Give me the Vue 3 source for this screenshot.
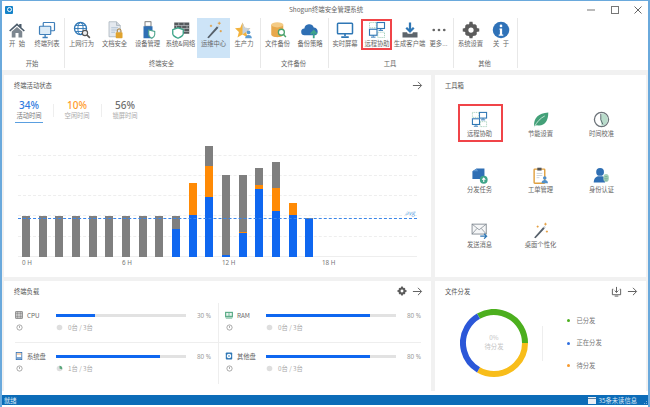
<template>
  <div class="window">
    <header class="titlebar">
      <span class="app-logo"><span></span></span>
      <span class="app-title">Shogun终端安全管理系统</span>
      <div class="win-ctrls">
        <svg width="10" height="10" viewBox="0 0 10 10"><path d="M1 5h8" stroke="#777" /></svg>
        <svg width="10" height="10" viewBox="0 0 10 10"><rect x="1.5" y="1.5" width="7" height="7" fill="none" stroke="#777" /></svg>
        <svg width="10" height="10" viewBox="0 0 10 10"><path d="M1.5 1.5l7 7M8.5 1.5l-7 7" stroke="#666" /></svg>
      </div>
    </header>

    <nav class="ribbon">
      <section v-for="group in ribbon" :key="group.name" class="rgroup">
        <div class="ritems">
          <div
            v-for="item in group.items"
            :key="item.label"
            class="ritem"
            :class="{ active: item.active, marked: item.marked }"
            :style="{ width: item.w + 'px' }"
          >
            <svg class="ricon" viewBox="0 0 24 24" v-html="icons[item.icon]"></svg>
            <span>{{ item.label }}</span>
          </div>
        </div>
        <div class="gname">{{ group.name }}</div>
      </section>
    </nav>

    <main class="content">
      <section class="panel activity">
        <div class="phead">
          <span class="ptitle">终端活动状态</span>
          <svg class="act" viewBox="0 0 12 12"><path d="M1 6h9M6.5 2l4 4-4 4" fill="none" stroke="#555" /></svg>
        </div>
        <div class="tabs">
          <div v-for="tab in tabs" :key="tab.label" class="tab" :class="{ on: tab.on }">
            <b :style="{ color: tab.color }">{{ tab.value }}</b>
            <span>{{ tab.label }}</span>
          </div>
        </div>
        <div class="chart">
          <i v-for="n in 6" :key="n" class="gridline"></i>
          <div class="bars">
            <div v-for="(bar, i) in bars" :key="i" class="bar">
              <i class="gray" :style="{ height: bar[0] + 'px' }"></i>
              <i class="orange" :style="{ height: bar[1] + 'px' }"></i>
              <i class="blue" :style="{ height: bar[2] + 'px' }"></i>
            </div>
          </div>
          <i class="avg"></i>
          <em class="avg-label">avg</em>
        </div>
        <div class="hours">
          <span v-for="h in ['0 H', '6 H', '12 H', '18 H']" :key="h">{{ h }}</span>
        </div>
      </section>

      <section class="panel tools">
        <div class="phead"><span class="ptitle">工具箱</span></div>
        <div class="tool-grid">
          <div v-for="tool in tools" :key="tool.label" class="tool" :class="{ marked: tool.marked }">
            <svg class="ticon" viewBox="0 0 24 24" v-html="icons[tool.icon]"></svg>
            <span>{{ tool.label }}</span>
          </div>
        </div>
      </section>

      <section class="panel load">
        <div class="phead">
          <span class="ptitle">终端负载</span>
          <div class="acts">
            <svg class="act gear" viewBox="0 0 24 24" v-html="icons.gear"></svg>
            <svg class="act" viewBox="0 0 12 12"><path d="M1 6h9M6.5 2l4 4-4 4" fill="none" stroke="#555" /></svg>
          </div>
        </div>
        <div class="meters">
          <div v-for="m in meters" :key="m.name" class="meter">
            <div class="mline">
              <svg class="micon" viewBox="0 0 10 10" v-html="m.icon"></svg>
              <span class="mname">{{ m.name }}</span>
              <div class="track"><div class="fill" :style="{ width: m.pct + '%' }"></div></div>
              <span class="mpct">{{ m.pct }} %</span>
            </div>
            <div class="msub">
              <svg class="info" viewBox="0 0 8 8"><circle cx="4" cy="4" r="3" fill="none" stroke="#777" stroke-width=".7" /><path d="M4 2.2v2.3" stroke="#777" stroke-width=".7" /></svg>
              <svg class="pie" viewBox="0 0 8 8"><circle cx="4" cy="4" r="3.2" fill="#dedede" /><path v-if="m.used" d="M4 4V.8A3.2 3.2 0 0 1 7 5z" fill="#5aa77c" /></svg>
              <span>{{ m.count }}</span>
            </div>
          </div>
        </div>
      </section>

      <section class="panel files">
        <div class="phead">
          <span class="ptitle">文件分发</span>
          <div class="acts">
            <svg class="act" viewBox="0 0 12 12"><path d="M2.5 3.5H1.5v6h9v-6h-1M6 1v6M4 5l2 2 2-2M4 11h4" fill="none" stroke="#555" /></svg>
            <svg class="act" viewBox="0 0 12 12"><path d="M1 6h9M6.5 2l4 4-4 4" fill="none" stroke="#555" /></svg>
          </div>
        </div>
        <div class="dist">
          <div class="donut">
            <svg width="68" height="68" viewBox="0 0 68 68">
              <g fill="none" stroke-width="6">
                <circle cx="34" cy="34" r="31" pathLength="3" stroke="#4caf1e" stroke-dasharray="1 2" transform="rotate(-120 34 34)" />
                <circle cx="34" cy="34" r="31" pathLength="3" stroke="#f8bd1a" stroke-dasharray="1 2" />
                <circle cx="34" cy="34" r="31" pathLength="3" stroke="#2b57d8" stroke-dasharray="1 2" transform="rotate(120 34 34)" />
              </g>
            </svg>
            <div class="donut-text">0%<br />待分发</div>
          </div>
          <i class="vr"></i>
          <ul class="legend">
            <li v-for="l in legend" :key="l.label"><i :style="{ background: l.color }"></i>{{ l.label }}</li>
          </ul>
        </div>
      </section>
    </main>

    <footer class="statusbar">
      <span>就绪</span>
      <div class="unread">
        <svg width="8" height="7" viewBox="0 0 8 7"><rect width="8" height="7" fill="#e8eef4" /><path d="M0 1.5h8" stroke="#5b7fa0" /></svg>
        <span>35条未读信息</span>
        <svg class="grip" width="5" height="5" viewBox="0 0 5 5"><path d="M4 0h1v1H4zM2 2h1v1H2zM4 2h1v1H4zM0 4h1v1H0zM2 4h1v1H2zM4 4h1v1H4z" fill="#7fb0d8" /></svg>
      </div>
    </footer>
  </div>
</template>

<script setup>
const icons = {
  home: '<path d="M12 3L1.5 12.5 3 14l9-8 9 8 1.5-1.5L18 8.500V4h-3v2z" fill="#4b5b6a"/><path d="M5 14l7-6 7 6v8h-5v-6h-4v6H5z" fill="#7d8790"/>',
  list: '<rect x="7" y="2" width="15" height="11" rx="1" fill="#fff" stroke="#3f7fba" stroke-width="1.6"/><rect x="2" y="7" width="15" height="11" rx="1" fill="#dcebf7" stroke="#3f7fba" stroke-width="1.6"/><path d="M9.5 18v3M6 22h7" stroke="#3f7fba" stroke-width="1.8"/>',
  web: '<circle cx="10" cy="10" r="8" fill="#fff" stroke="#2f77b5" stroke-width="1.8"/><ellipse cx="10" cy="10" rx="3.5" ry="8" fill="none" stroke="#2f77b5" stroke-width="1.3"/><path d="M2 10h16M3.5 6h13M3.5 14h13" stroke="#2f77b5" stroke-width="1.2"/><circle cx="16" cy="16" r="3.5" fill="#eee" stroke="#555" stroke-width="1.5"/><path d="M18.5 18.5l4 4" stroke="#555" stroke-width="2"/>',
  doc: '<path d="M4 1h10l5 5v15H4z" fill="#e4e9ef" stroke="#a6b0ba"/><path d="M14 1v5h5" fill="#cfd6dd" stroke="#a6b0ba"/><path d="M7 9h9M7 12h9M7 15h5" stroke="#9fb6cc"/><rect x="13" y="15" width="9" height="8" rx="1" fill="#e0a32e"/><path d="M15 15v-2a2.5 2.5 0 0 1 5 0v2" fill="none" stroke="#a5762a" stroke-width="1.3"/>',
  usb: '<rect x="8" y="1" width="8" height="6" fill="#fff" stroke="#555"/><rect x="6" y="7" width="12" height="16" fill="#2f6fb4"/><path d="M13 12l8 2v4c0 3-4 5-4 5s-4-2-4-5z" fill="#fff" stroke="#4aa389" stroke-width="1.4"/>',
  wall: '<rect x="3" y="2" width="20" height="15" fill="#55595c"/><path d="M3 6h20M3 10h20M3 14h20M9 2v4M16 2v4M6 6v4M13 6v4M20 6v4M9 10v4M16 10v4" stroke="#c9cdd0" stroke-width=".8"/><path d="M8 9l7 2.5V17c0 3-7 6-7 6s-7-3-7-6v-5.5z" fill="#fff" stroke="#3fa58a" stroke-width="1.8"/>',
  wand: '<path d="M3 22L16 7l2 2L5 23z" fill="#56606a"/><path d="M16 7l2 2 1.5-1.700-2-2z" fill="#c9d1d8"/><path d="M19 1v4M17 3h4M8 5v3M6.5 6.5h3M21 12v3M19.5 13.5h3" stroke="#e3962e" stroke-width="1.1"/>',
  star: '<path d="M10 2l3 7 7.5.5-5.700 5 1.900 7.500L10 18l-6.700 4 1.900-7.500L0 9.500 7 9z" fill="#f2b33d"/><path d="M10 2l3 7 7.500.5-5.700 5L10 18z" fill="#c7d2dc"/><circle cx="18" cy="15" r="2.500" fill="#5b9bd0"/><path d="M13.500 23c0-3 2-4.500 4.500-4.500s4.500 1.500 4.500 4.500z" fill="#5b9bd0"/>',
  db: '<path d="M3 5v13c0 2 3.5 3.5 8 3.5s8-1.500 8-3.500V5z" fill="#e8a94c"/><ellipse cx="11" cy="5" rx="8" ry="3.5" fill="#f4cb85"/><circle cx="16.5" cy="15" r="4" fill="#fff" stroke="#4aa36d" stroke-width="1.7"/><path d="M19.5 18l3 3.5" stroke="#4aa36d" stroke-width="2"/>',
  cloud: '<path d="M5 19a4.5 4.5 0 0 1-.5-9A6.500 6.500 0 0 1 17 8.500a5.500 5.500 0 0 1 2 10.500z" fill="#2f6fb4"/><path d="M17 23v-8M13 17.500l4-4.500 4 4.500" fill="none" stroke="#3fa58a" stroke-width="2.4"/>',
  monitor: '<rect x="2" y="3" width="20" height="14" rx="1" fill="#fff" stroke="#2f77b5" stroke-width="2"/><path d="M12 17v3M7 21.5h10" stroke="#2f77b5" stroke-width="2.2"/>',
  remote: '<rect x="2" y="2" width="9" height="7" fill="none" stroke="#8cc4a8" stroke-dasharray="1.5 1"/><rect x="13" y="15" width="9" height="7" fill="none" stroke="#8cc4a8" stroke-dasharray="1.5 1"/><rect x="12" y="2" width="10" height="8" fill="#fff" stroke="#2f77b5" stroke-width="1.5"/><path d="M17 10v2M14 12.5h6" stroke="#2f77b5" stroke-width="1.3"/><rect x="2" y="11" width="10" height="8" fill="#fff" stroke="#2f77b5" stroke-width="1.5"/><path d="M7 19v2M4 21.5h6" stroke="#2f77b5" stroke-width="1.3"/>',
  client: '<path d="M12 2v11M7 9l5 5 5-5" fill="none" stroke="#2f77b5" stroke-width="3"/><path d="M2 15h6l1 2h6l1-2h6v7H2z" fill="#5d656c"/>',
  more: '<circle cx="5" cy="12" r="1.8" fill="#666"/><circle cx="12" cy="12" r="1.8" fill="#666"/><circle cx="19" cy="12" r="1.8" fill="#666"/>',
  gear: '<circle cx="12" cy="12" r="6" fill="none" stroke="#5c5c5c" stroke-width="5"/><path d="M10 1h4l.6 4H9.400zM10 23h4l.6-4H9.400zM1 10v4l4 .6V9.400zM23 10v4l-4 .6V9.400zM3.900 6.700l2.800-2.800 3.300 2.400L6.300 10zM20.100 17.300l-2.800 2.800-3.300-2.400 3.700-3.700zM17.300 3.900l2.800 2.800-2.400 3.300L14 6.300zM6.700 20.100l-2.800-2.800 2.400-3.300 3.700 3.700z" fill="#5c5c5c"/>',
  about: '<circle cx="12" cy="12" r="11" fill="#2f72b8"/><circle cx="12" cy="6.5" r="1.8" fill="#fff"/><path d="M10 10h3.5v8H15v1.500H9V18h1.500v-6.500H10z" fill="#fff"/>',
  leaf: '<path d="M3 21C2 10 9 3 23 2c0 13-6 20-16 18z" fill="#43a078"/><path d="M3 23C7 15 12 10 18 7" fill="none" stroke="#d6eee3" stroke-width="1.2"/>',
  clock: '<circle cx="12" cy="12" r="10" fill="#fff" stroke="#6b7278" stroke-width="1.8"/><path d="M12 3a9 9 0 0 1 0 18l-1.500-9z" fill="#b9dccb"/><path d="M11 4v8l3 7" fill="none" stroke="#55606a" stroke-width="1.3"/>',
  task: '<path d="M2 6l6-4h11v15H2z" fill="#2f6fb4"/><path d="M8 2l2 4H2zM13 2v6" fill="#5b94cf"/><circle cx="18" cy="18" r="5.5" fill="#3fa58a"/><path d="M18 21v-5M15.800 18l2.200-2.500 2.200 2.500" fill="none" stroke="#fff" stroke-width="1.5"/>',
  clipboard: '<rect x="3" y="3" width="15" height="20" rx="1" fill="#fff" stroke="#e0a040" stroke-width="2"/><rect x="7.5" y="1" width="6" height="4" fill="#555"/><path d="M6.5 9h8M6.5 12h8M6.5 15h4" stroke="#b6c2cc"/><circle cx="18" cy="15.5" r="2.5" fill="#4f8fc9"/><path d="M13.500 23c0-3 2-4.500 4.500-4.500s4.500 1.500 4.500 4.500z" fill="#4f8fc9"/>',
  identity: '<circle cx="10" cy="7" r="5.5" fill="#2f6fb4"/><path d="M1 22c0-6 3-8 6-9h6c2 .6 3 1.500 4 3v6z" fill="#2f6fb4"/><ellipse cx="18.5" cy="15.5" rx="4" ry="5.5" fill="#a8d0bb"/><path d="M16.500 13.500h4M16 16h5M16.500 18.500h4" stroke="#5ba283" stroke-width=".8"/>',
  mail: '<rect x="1.5" y="3" width="20" height="14" fill="#f5f6f7" stroke="#7b848c" stroke-width="1.2"/><path d="M1.500 3l10 8 10-8M1.500 17l7-8M21.500 17l-7-8" fill="none" stroke="#7b848c"/><path d="M13 20h9M18.500 16.500L22 20l-3.500 3.500" fill="none" stroke="#2f77b5" stroke-width="1.8"/>',
}

const ribbon = [
  { name: '开始', items: [
    { label: '开 始', icon: 'home', w: 30 },
    { label: '终端列表', icon: 'list', w: 30 },
  ] },
  { name: '终端安全', items: [
    { label: '上网行为', icon: 'web', w: 33 },
    { label: '文档安全', icon: 'doc', w: 33 },
    { label: '设备管理', icon: 'usb', w: 33 },
    { label: '系统&网络', icon: 'wall', w: 33 },
    { label: '运维中心', icon: 'wand', w: 33, active: true },
    { label: '生产力', icon: 'star', w: 28 },
  ] },
  { name: '文件备份', items: [
    { label: '文件备份', icon: 'db', w: 33 },
    { label: '备份策略', icon: 'cloud', w: 32 },
  ] },
  { name: '工具', items: [
    { label: '实时屏幕', icon: 'monitor', w: 32 },
    { label: '远程协助', icon: 'remote', w: 32, marked: true },
    { label: '生成客户端', icon: 'client', w: 33 },
    { label: '更多...', icon: 'more', w: 25 },
  ] },
  { name: '其他', items: [
    { label: '系统设置', icon: 'gear', w: 33 },
    { label: '关 于', icon: 'about', w: 28 },
  ] },
]

const tabs = [
  { value: '34%', label: '活动时间', color: '#2f7be0', on: true },
  { value: '10%', label: '空闲时间', color: '#ff9a1f' },
  { value: '56%', label: '锁屏时间', color: '#6f6f6f' },
]

// gray, orange, blue heights of each hour
const bars = [
  [41, 0, 0], [41, 0, 0], [41, 0, 0], [41, 0, 0], [41, 0, 0], [41, 0, 0],
  [41, 0, 0], [41, 0, 0], [41, 0, 0], [13, 0, 28], [0, 32, 42], [20, 31, 60],
  [80, 0, 2], [57, 1, 24], [17, 4, 68], [26, 23, 46], [0, 12, 42], [1, 0, 38],
]

const tools = [
  { label: '远程协助', icon: 'remote', marked: true },
  { label: '节能设置', icon: 'leaf' },
  { label: '时间校准', icon: 'clock' },
  { label: '分发任务', icon: 'task' },
  { label: '工单管理', icon: 'clipboard' },
  { label: '身份认证', icon: 'identity' },
  { label: '发送消息', icon: 'mail' },
  { label: '桌面个性化', icon: 'wand' },
]

const meters = [
  { name: 'CPU', pct: 30, count: '0台 / 3台', icon: '<rect x="1" y="1" width="8" height="8" fill="#fff" stroke="#555"/><path d="M1 3.5h8M1 6.5h8M3.5 1v8M6.500 1v8" stroke="#555" stroke-width=".7"/>' },
  { name: 'RAM', pct: 80, count: '0台 / 3台', icon: '<rect x="0" y="1" width="10" height="7" fill="#5fae8a"/><rect x="1.5" y="2.5" width="3" height="3.5" fill="#e8f4ee"/><rect x="5.5" y="2.5" width="3" height="3.5" fill="#e8f4ee"/><path d="M1 9h8" stroke="#5fae8a"/>' },
  { name: '系统盘', pct: 80, used: true, count: '1台 / 3台', icon: '<rect x="1.5" y=".5" width="7" height="9" fill="#fff" stroke="#2f6fb4"/><path d="M2 2.500h6" stroke="#e08a3c"/><path d="M2 7.500h6" stroke="#2f6fb4" stroke-width="1.5"/>' },
  { name: '其他盘', pct: 80, count: '0台 / 3台', icon: '<rect x="1" y=".5" width="8" height="9" rx="1" fill="#2f77b5"/><circle cx="5" cy="5" r="2.8" fill="#fff"/><circle cx="5" cy="5" r="1" fill="#2f77b5"/>' },
]

const legend = [
  { label: '已分发', color: '#4caf1e' },
  { label: '正在分发', color: '#2f6fe0' },
  { label: '待分发', color: '#f79a2e' },
]
</script>

<style>
html,
body {
  margin: 0;
  background: #fff;
}
</style>

<style scoped>
.window {
  width: 650px;
  height: 407px;
  box-sizing: border-box;
  border: 1px solid #6aa9dc;
  border-width: 1px 2px 0 2px;
  display: flex;
  flex-direction: column;
  overflow: hidden;
  font-family: "Noto Sans CJK SC", "Noto Sans", sans-serif;
  font-size: 6.3px;
  color: #666;
  background: #fff;
}

.titlebar {
  height: 17px;
  flex: none;
  display: flex;
  align-items: center;
  position: relative;
  padding-left: 3px;
}
.app-logo {
  width: 8px;
  height: 8px;
  background: #1583c9;
  border-radius: 1px;
  display: flex;
  align-items: center;
  justify-content: center;
}
.app-logo span {
  width: 3px;
  height: 3px;
  border: 1px solid #fff;
  border-radius: 50%;
}
.app-title {
  position: absolute;
  left: 287px;
  top: 4px;
  font-size: 6.4px;
  line-height: 9px;
  color: #666;
}
.win-ctrls {
  margin-left: auto;
  display: flex;
  gap: 13.5px;
  padding-right: 5px;
}

.ribbon {
  height: 52px;
  flex: none;
  display: flex;
}
.rgroup {
  border-right: 1px solid #e8e8e8;
  height: 50px;
  display: flex;
  flex-direction: column;
  padding: 0 2px 0 0;
}
.ritems {
  display: flex;
  height: 41px;
}
.ritem {
  box-sizing: border-box;
  display: flex;
  flex-direction: column;
  align-items: center;
  padding-top: 3px;
  white-space: nowrap;
  position: relative;
}
.ritem span {
  margin-top: 1px;
  line-height: 8px;
  word-spacing: 2px;
}
.ritem.active {
  background: #cde4f7;
}
.ritem.marked::after {
  content: "";
  position: absolute;
  inset: 1px 1px 8px 0;
  border: 2px solid #f04448;
}
.ricon {
  width: 18px;
  height: 18px;
  flex: none;
}
.gname {
  text-align: center;
  line-height: 8px;
  margin-top: 2px;
}

.content {
  flex: 1;
  min-height: 0;
  background: #f1f1f1;
  display: grid;
  grid-template-columns: 427px 211px;
  grid-template-rows: 202px 110px;
  gap: 4px;
  padding: 5px 1px 0 2px;
}
.panel {
  background: #fff;
  position: relative;
  min-width: 0;
}
.phead {
  display: flex;
  justify-content: space-between;
  align-items: center;
  height: 12px;
  padding: 4px 8px 0 10px;
}
.ptitle {
  font-size: 6.3px;
  color: #555;
}
.act {
  width: 11px;
  height: 11px;
}
.acts {
  display: flex;
  align-items: center;
  gap: 5px;
}
.gear {
  width: 10px;
  height: 10px;
}

.tabs {
  display: flex;
  margin: 8px 0 0 1px;
}
.tab {
  width: 48px;
  display: flex;
  flex-direction: column;
  align-items: center;
  position: relative;
  color: #aaa;
  padding-bottom: 3px;
  box-sizing: border-box;
}
.tab + .tab::before {
  content: "";
  position: absolute;
  left: 0;
  top: 5px;
  height: 13px;
  width: 1px;
  background: #eee;
}
.tab b {
  font-size: 10px;
  line-height: 13px;
  font-weight: 500;
  font-family: "Noto Sans", sans-serif;
}
.tab span {
  line-height: 8px;
}
.tab.on {
  color: #777;
}
.tab.on::after {
  content: "";
  position: absolute;
  left: 10px;
  bottom: 0;
  width: 28px;
  height: 1.5px;
  background: #5a9fe0;
}

.chart {
  position: relative;
  height: 111px;
  margin: 23px 14px 0 14px;
}
.gridline {
  position: absolute;
  left: 0;
  right: 0;
  border-top: 1px dashed #eee;
}
.gridline:nth-child(1) { top: 9px; }
.gridline:nth-child(2) { top: 29px; }
.gridline:nth-child(3) { top: 49px; }
.gridline:nth-child(4) { top: 69px; }
.gridline:nth-child(5) { top: 90px; }
.gridline:nth-child(6) { top: 110px; border-top: 1px solid #eee; }
.bars {
  position: absolute;
  inset: 0 0 0 4px;
  display: flex;
  gap: 8.67px;
  align-items: flex-end;
}
.bar {
  width: 8px;
  display: flex;
  flex-direction: column;
}
.bar i {
  display: block;
}
.gray { background: #7f7f7f; }
.orange { background: #ff8a05; }
.blue { background: #0f67f0; }
.avg {
  position: absolute;
  left: 0;
  right: 0;
  top: 72px;
  border-top: 1px dashed #3c86e8;
}
.avg-label {
  position: absolute;
  right: 2px;
  top: 63px;
  color: #5a9fe0;
  font-size: 6px;
  line-height: 8px;
}
.hours {
  display: flex;
  margin: 2px 0 0 18px;
  line-height: 8px;
  color: #777;
}
.hours span {
  width: 100px;
  font-family: "Noto Sans", sans-serif;
}

.tool-grid {
  display: grid;
  grid-template-columns: repeat(3, 61px);
  grid-auto-rows: 55.5px;
  margin: 13px 0 0 14px;
  justify-content: start;
}
.tool {
  box-sizing: border-box;
  display: flex;
  flex-direction: column;
  align-items: center;
  position: relative;
  padding-top: 7px;
}
.tool span {
  line-height: 8px;
  margin-top: 2px;
}
.tool.marked::after {
  content: "";
  position: absolute;
  left: 9px;
  top: 0;
  width: 41px;
  height: 34px;
  border: 2px solid #f04448;
}
.ticon {
  width: 17px;
  height: 17px;
  flex: none;
}

.meters {
  display: grid;
  grid-template-columns: 1fr 1fr;
  margin: 6px 10px 0 11px;
  position: relative;
}
.meters::after {
  content: "";
  position: absolute;
  left: 203px;
  top: 0;
  bottom: 0;
  border-left: 1px solid #eee;
}
.meter {
  height: 41px;
  box-sizing: border-box;
  padding-top: 7px;
}
.meter:nth-child(-n + 2) {
  height: 40px;
  border-bottom: 1px solid #eee;
}
.meter:nth-child(n + 3) {
  padding-top: 8px;
}
.meter:nth-child(even) {
  padding-left: 7px;
}
.mline {
  display: flex;
  align-items: center;
  height: 10px;
}
.micon {
  width: 8px;
  height: 8px;
  flex: none;
}
.mname {
  width: 29px;
  margin-left: 4px;
  flex: none;
}
.track {
  width: 130px;
  height: 3px;
  background: #e2e2e2;
  flex: none;
}
.fill {
  height: 100%;
  background: #0f67f0;
}
.mpct {
  width: 25px;
  text-align: right;
  flex: none;
  color: #999;
  font-family: "Noto Sans", sans-serif;
}
.msub {
  display: flex;
  align-items: center;
  height: 8px;
  margin-top: 3px;
  color: #aaa;
}
.info {
  width: 7px;
  height: 7px;
  margin-left: 1px;
  flex: none;
}
.pie {
  width: 7px;
  height: 7px;
  margin-left: 33px;
  margin-right: 5px;
  flex: none;
}

.dist {
  display: flex;
  align-items: center;
  margin: 12px 0 0 25px;
}
.donut {
  width: 68px;
  height: 68px;
  position: relative;
  flex: none;
}
.donut svg {
  display: block;
}
.donut-text {
  position: absolute;
  inset: 0;
  text-align: center;
  padding-top: 25px;
  line-height: 8.5px;
  color: #c4c4c4;
}
.vr {
  width: 1px;
  height: 35px;
  background: #eee;
  margin-left: 14px;
  flex: none;
}
.legend {
  list-style: none;
  margin: 0;
  padding: 0 0 0 24px;
  display: flex;
  flex-direction: column;
  gap: 14.5px;
}
.legend li {
  display: flex;
  align-items: center;
  line-height: 8px;
  color: #777;
}
.legend i {
  width: 3px;
  height: 3px;
  border-radius: 50%;
  margin-right: 6.5px;
}

.statusbar {
  height: 10px;
  margin: 4px -2px 2px;
  flex: none;
  background: #0c6cb8;
  color: #dfeaf4;
  display: flex;
  justify-content: space-between;
  align-items: center;
  padding: 0 1px 0 4px;
}
.unread {
  display: flex;
  align-items: center;
  gap: 3px;
}
.grip {
  margin-left: 4px;
  margin-top: 3px;
}
</style>
